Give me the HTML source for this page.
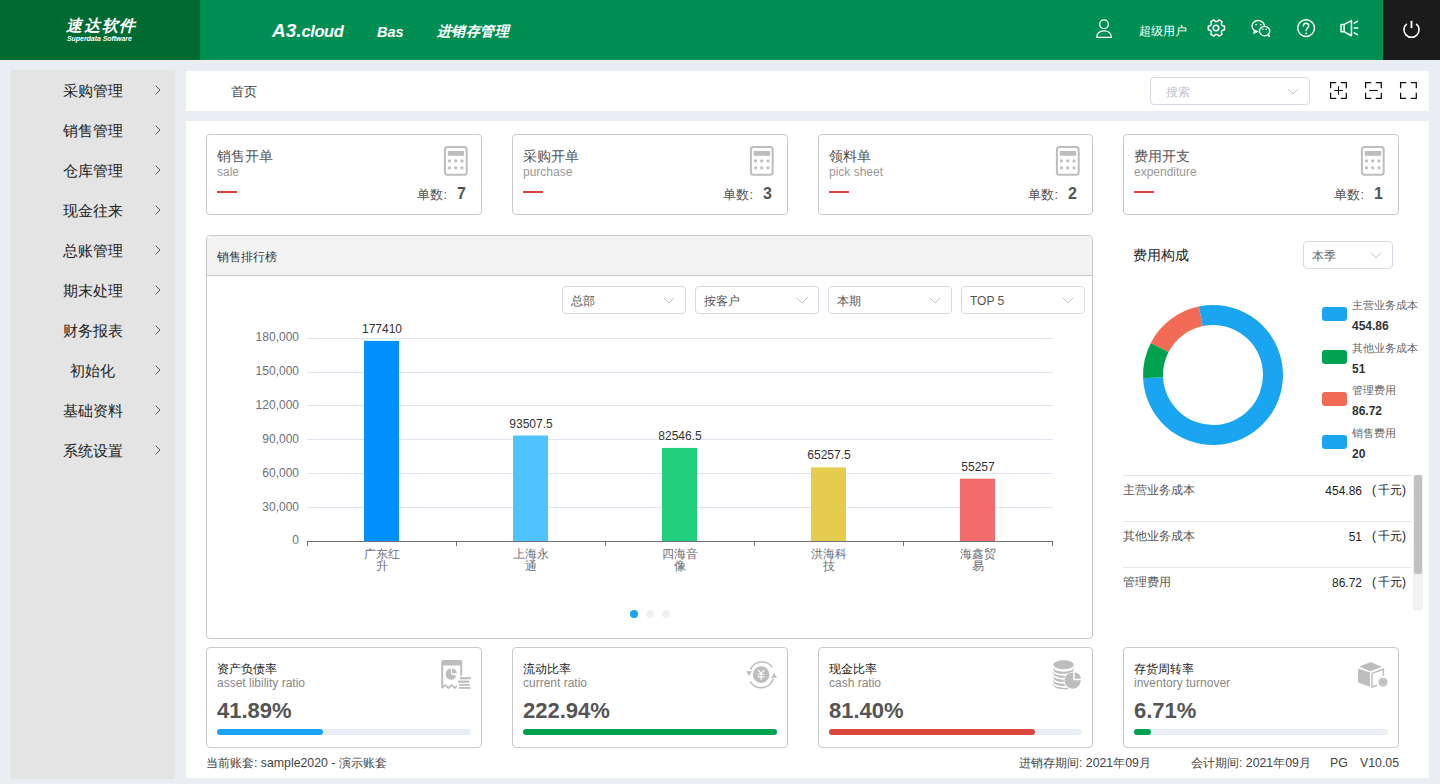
<!DOCTYPE html>
<html><head><meta charset="utf-8">
<style>
*{box-sizing:border-box;margin:0;padding:0}
html,body{width:1440px;height:784px;overflow:hidden}
body{background:#eaeef3;font-family:"Liberation Sans",sans-serif;position:relative;color:#333}
.abs{position:absolute}
#hdr{left:0;top:0;width:1440px;height:60px;background:#008f53}
#logo{left:0;top:0;width:200px;height:60px;background:#006b31}
#pwr{left:1383px;top:0;width:57px;height:60px;background:#1b1b1b}
.wt{color:#fff;white-space:nowrap}
#side{left:10px;top:70px;width:165px;height:709px;background:#e4e4e4}
.mi{position:absolute;left:0;width:165px;height:20px;font-size:15px;line-height:20px;color:#222}
.mi span{position:absolute;left:52px;width:61px;text-align:center}
.mi svg{position:absolute;left:145px;top:4px}
#crumb{left:186px;top:71px;width:1243px;height:40px;background:#fff}
#main{left:186px;top:121px;width:1243px;height:657px;background:#fff}
.card{position:absolute;border:1px solid #c9c9c9;border-radius:4px;background:#fff}
.sel{position:absolute;border:1px solid #d7dae2;border-radius:4px;background:#fff;font-size:12px;color:#555}
.sel svg{position:absolute}
</style></head><body>
<div id="hdr" class="abs"></div>
<div id="logo" class="abs"></div>
<div id="pwr" class="abs"></div>

<div class="abs wt" style="left:66px;top:16px;font-size:16px;font-weight:900;font-style:italic;line-height:20px;letter-spacing:1.8px">速达软件</div>
<div class="abs wt" style="left:67px;top:35px;font-size:7px;font-weight:bold;font-style:italic;line-height:8px;letter-spacing:-0.05px">Superdata Software</div>
<div class="abs wt" style="left:272px;top:19px;font-size:19px;font-weight:bold;font-style:italic;line-height:24px">A3.<span style="font-size:16.5px;letter-spacing:-0.45px">cloud</span></div>
<div class="abs wt" style="left:377px;top:22px;font-size:14.5px;font-weight:bold;font-style:italic;line-height:20px">Bas</div>
<div class="abs wt" style="left:437px;top:21px;font-size:14px;letter-spacing:0.4px;font-weight:bold;font-style:italic;line-height:20px">进销存管理</div>
<!-- user icon -->
<svg class="abs" style="left:1094px;top:18px" width="20" height="22" viewBox="0 0 20 22" fill="none" stroke="#fff" stroke-width="1.35">
<circle cx="10" cy="6.2" r="4.35"/><path d="M2.6 19.4 C2.6 15.3 5.8 12.8 10 12.8 C14.2 12.8 17.4 15.3 17.4 19.4 Z"/></svg>
<div class="abs wt" style="left:1139px;top:22px;font-size:12px;line-height:18px">超级用户</div>
<!-- gear -->
<svg class="abs" style="left:1205px;top:17px" width="22" height="22" viewBox="0 0 22 22" fill="none" stroke="#fff" stroke-width="1.5" stroke-linejoin="round">
<path transform="rotate(90 11 11)" d="M9.2 2.5 h3.6 l0.6 2.3 l1.6 0.9 l2.3 -0.7 l1.8 3.1 l-1.7 1.6 v1.8 l1.7 1.6 l-1.8 3.1 l-2.3 -0.7 l-1.6 0.9 l-0.6 2.3 h-3.6 l-0.6 -2.3 l-1.6 -0.9 l-2.3 0.7 l-1.8 -3.1 l1.7 -1.6 v-1.8 l-1.7 -1.6 l1.8 -3.1 l2.3 0.7 l1.6 -0.9 z"/>
<circle cx="11" cy="11" r="2.8"/></svg>
<!-- wechat -->
<svg class="abs" style="left:1245px;top:14px" width="30" height="30" viewBox="0 0 30 30" fill="none" stroke="#fff" stroke-width="1.3">
<path d="M19.4 11.6 A6.2 5.5 0 1 0 13.3 17.5"/><path d="M9.3 16.6 L8.6 19.6 L12.2 17.9" fill="#fff" stroke-width="0.9" stroke-linejoin="round"/>
<ellipse cx="19.6" cy="17.05" rx="5.15" ry="4.7"/><path d="M22.6 21.2 L24.3 23 L24.1 20.6" fill="#fff" stroke-width="0.9" stroke-linejoin="round"/>
<g fill="#fff" stroke="none"><rect x="10.2" y="10" width="1.6" height="1.3"/><rect x="14.9" y="10" width="1.6" height="1.3"/>
<rect x="17.1" y="14.6" width="1.3" height="1.3"/><rect x="20.6" y="14.6" width="1.3" height="1.3"/></g></svg>
<!-- help -->
<svg class="abs" style="left:1295px;top:17px" width="22" height="22" viewBox="0 0 22 22" fill="none" stroke="#fff" stroke-width="1.4">
<circle cx="11.1" cy="11.1" r="8.4"/><path d="M8.4 8.9 C8.4 7.2 9.6 6.3 11.1 6.3 C12.7 6.3 13.7 7.4 13.7 8.7 C13.7 10.6 11.2 11 11.2 13.6" stroke-linecap="round"/>
<circle cx="11.2" cy="16.4" r="0.95" fill="#fff" stroke="none"/></svg>
<!-- speaker -->
<svg class="abs" style="left:1339px;top:17px" width="22" height="22" viewBox="0 0 22 22" fill="none" stroke="#fff" stroke-width="1.5" stroke-linejoin="round">
<path d="M2.05 7.4 h3.2 l7.2 -3.85 v15.2 l-7.2 -3.9 h-3.2 z"/><path d="M5.1 7.4 v7.5"/>
<path d="M15.2 6.1 l3.2 -1.8 M15.2 11 h3.5 M15.2 15.9 l3.2 1.8" stroke-linecap="round"/></svg>
<!-- power -->
<svg class="abs" style="left:1401px;top:18px" width="22" height="22" viewBox="0 0 22 22" fill="none" stroke="#fff" stroke-width="1.6">
<path d="M5.85 5.80 A7.55 7.55 0 1 0 15.15 5.80"/><path d="M10.5 2.8 V10.1" stroke-width="1.9"/></svg>
<div id="side" class="abs">
<div class="mi" style="top:11px"><span>采购管理</span><svg width="6" height="10" viewBox="0 0 6 10" fill="none" stroke="#555" stroke-width="1"><path d="M0.6 0.6 L5 5 L0.6 9.4"/></svg></div>
<div class="mi" style="top:51px"><span>销售管理</span><svg width="6" height="10" viewBox="0 0 6 10" fill="none" stroke="#555" stroke-width="1"><path d="M0.6 0.6 L5 5 L0.6 9.4"/></svg></div>
<div class="mi" style="top:91px"><span>仓库管理</span><svg width="6" height="10" viewBox="0 0 6 10" fill="none" stroke="#555" stroke-width="1"><path d="M0.6 0.6 L5 5 L0.6 9.4"/></svg></div>
<div class="mi" style="top:131px"><span>现金往来</span><svg width="6" height="10" viewBox="0 0 6 10" fill="none" stroke="#555" stroke-width="1"><path d="M0.6 0.6 L5 5 L0.6 9.4"/></svg></div>
<div class="mi" style="top:171px"><span>总账管理</span><svg width="6" height="10" viewBox="0 0 6 10" fill="none" stroke="#555" stroke-width="1"><path d="M0.6 0.6 L5 5 L0.6 9.4"/></svg></div>
<div class="mi" style="top:211px"><span>期末处理</span><svg width="6" height="10" viewBox="0 0 6 10" fill="none" stroke="#555" stroke-width="1"><path d="M0.6 0.6 L5 5 L0.6 9.4"/></svg></div>
<div class="mi" style="top:251px"><span>财务报表</span><svg width="6" height="10" viewBox="0 0 6 10" fill="none" stroke="#555" stroke-width="1"><path d="M0.6 0.6 L5 5 L0.6 9.4"/></svg></div>
<div class="mi" style="top:291px"><span>初始化</span><svg width="6" height="10" viewBox="0 0 6 10" fill="none" stroke="#555" stroke-width="1"><path d="M0.6 0.6 L5 5 L0.6 9.4"/></svg></div>
<div class="mi" style="top:331px"><span>基础资料</span><svg width="6" height="10" viewBox="0 0 6 10" fill="none" stroke="#555" stroke-width="1"><path d="M0.6 0.6 L5 5 L0.6 9.4"/></svg></div>
<div class="mi" style="top:371px"><span>系统设置</span><svg width="6" height="10" viewBox="0 0 6 10" fill="none" stroke="#555" stroke-width="1"><path d="M0.6 0.6 L5 5 L0.6 9.4"/></svg></div>
</div>
<div id="crumb" class="abs"></div>
<div id="main" class="abs"></div>

<div class="abs" style="left:231px;top:83px;font-size:13px;line-height:18px;color:#444">首页</div>
<div class="sel" style="left:1150px;top:77px;width:160px;height:28px">
<span style="position:absolute;left:15px;top:6px;line-height:16px;color:#c0c4cc">搜索</span>
<svg style="left:136px;top:10px" width="12" height="7" viewBox="0 0 12 7" fill="none" stroke="#c0c4cc" stroke-width="1"><path d="M0.8 0.8 L6 6 L11.2 0.8"/></svg></div>
<svg class="abs" style="left:1329px;top:81px" width="19" height="19" viewBox="0 0 19 19" fill="none" stroke="#111" stroke-width="1.25">
<path d="M1.6 7.2 V1.7 H7.2 M11.8 1.7 H17.3 V7.2 M17.3 11.8 V17.3 H11.8 M7.2 17.3 H1.6 V11.8"/><path d="M5.2 9.5 H13.8 M9.5 5.2 V13.8" stroke-width="1.1"/></svg>
<svg class="abs" style="left:1364px;top:81px" width="19" height="19" viewBox="0 0 19 19" fill="none" stroke="#111" stroke-width="1.25">
<path d="M1.6 7.2 V1.7 H7.2 M11.8 1.7 H17.3 V7.2 M17.3 11.8 V17.3 H11.8 M7.2 17.3 H1.6 V11.8"/><path d="M5.2 9.5 H13.8" stroke-width="1.1"/></svg>
<svg class="abs" style="left:1399px;top:81px" width="19" height="19" viewBox="0 0 19 19" fill="none" stroke="#111" stroke-width="1.25">
<path d="M1.6 7.2 V1.7 H7.2 M11.8 1.7 H17.3 V7.2 M17.3 11.8 V17.3 H11.8 M7.2 17.3 H1.6 V11.8"/></svg>

<div class="card" style="left:206px;top:134px;width:276px;height:81px">
<div style="position:absolute;left:10px;top:12px;font-size:14px;line-height:18px;color:#555">销售开单</div>
<div style="position:absolute;left:10px;top:29px;font-size:12px;line-height:16px;color:#999">sale</div>
<div style="position:absolute;left:10px;top:56px;width:20px;height:2px;background:#d9443a"></div>
<svg style="position:absolute;left:236px;top:10px" width="28" height="32" viewBox="0 0 28 32" fill="none">
<rect x="1.9" y="2.1" width="21.8" height="27.6" rx="2.5" stroke="#bdbdbd" stroke-width="2"/>
<rect x="4.8" y="6" width="16.3" height="4.8" fill="#bdbdbd"/>
<g fill="#bdbdbd"><circle cx="6.5" cy="15.9" r="1.6"/><circle cx="12.7" cy="15.9" r="1.6"/><circle cx="19" cy="15.9" r="1.6"/>
<circle cx="6.5" cy="22.8" r="1.6"/><circle cx="12.7" cy="22.8" r="1.6"/><circle cx="19" cy="22.8" r="1.6"/></g></svg>
<div style="position:absolute;right:15px;top:50px;font-size:13px;line-height:18px;color:#555;white-space:nowrap">单数:<b style="font-size:16px;margin-left:10px">7</b></div>
</div>
<div class="card" style="left:512px;top:134px;width:276px;height:81px">
<div style="position:absolute;left:10px;top:12px;font-size:14px;line-height:18px;color:#555">采购开单</div>
<div style="position:absolute;left:10px;top:29px;font-size:12px;line-height:16px;color:#999">purchase</div>
<div style="position:absolute;left:10px;top:56px;width:20px;height:2px;background:#d9443a"></div>
<svg style="position:absolute;left:236px;top:10px" width="28" height="32" viewBox="0 0 28 32" fill="none">
<rect x="1.9" y="2.1" width="21.8" height="27.6" rx="2.5" stroke="#bdbdbd" stroke-width="2"/>
<rect x="4.8" y="6" width="16.3" height="4.8" fill="#bdbdbd"/>
<g fill="#bdbdbd"><circle cx="6.5" cy="15.9" r="1.6"/><circle cx="12.7" cy="15.9" r="1.6"/><circle cx="19" cy="15.9" r="1.6"/>
<circle cx="6.5" cy="22.8" r="1.6"/><circle cx="12.7" cy="22.8" r="1.6"/><circle cx="19" cy="22.8" r="1.6"/></g></svg>
<div style="position:absolute;right:15px;top:50px;font-size:13px;line-height:18px;color:#555;white-space:nowrap">单数:<b style="font-size:16px;margin-left:10px">3</b></div>
</div>
<div class="card" style="left:818px;top:134px;width:275px;height:81px">
<div style="position:absolute;left:10px;top:12px;font-size:14px;line-height:18px;color:#555">领料单</div>
<div style="position:absolute;left:10px;top:29px;font-size:12px;line-height:16px;color:#999">pick sheet</div>
<div style="position:absolute;left:10px;top:56px;width:20px;height:2px;background:#d9443a"></div>
<svg style="position:absolute;left:236px;top:10px" width="28" height="32" viewBox="0 0 28 32" fill="none">
<rect x="1.9" y="2.1" width="21.8" height="27.6" rx="2.5" stroke="#bdbdbd" stroke-width="2"/>
<rect x="4.8" y="6" width="16.3" height="4.8" fill="#bdbdbd"/>
<g fill="#bdbdbd"><circle cx="6.5" cy="15.9" r="1.6"/><circle cx="12.7" cy="15.9" r="1.6"/><circle cx="19" cy="15.9" r="1.6"/>
<circle cx="6.5" cy="22.8" r="1.6"/><circle cx="12.7" cy="22.8" r="1.6"/><circle cx="19" cy="22.8" r="1.6"/></g></svg>
<div style="position:absolute;right:15px;top:50px;font-size:13px;line-height:18px;color:#555;white-space:nowrap">单数:<b style="font-size:16px;margin-left:10px">2</b></div>
</div>
<div class="card" style="left:1123px;top:134px;width:276px;height:81px">
<div style="position:absolute;left:10px;top:12px;font-size:14px;line-height:18px;color:#555">费用开支</div>
<div style="position:absolute;left:10px;top:29px;font-size:12px;line-height:16px;color:#999">expenditure</div>
<div style="position:absolute;left:10px;top:56px;width:20px;height:2px;background:#d9443a"></div>
<svg style="position:absolute;left:236px;top:10px" width="28" height="32" viewBox="0 0 28 32" fill="none">
<rect x="1.9" y="2.1" width="21.8" height="27.6" rx="2.5" stroke="#bdbdbd" stroke-width="2"/>
<rect x="4.8" y="6" width="16.3" height="4.8" fill="#bdbdbd"/>
<g fill="#bdbdbd"><circle cx="6.5" cy="15.9" r="1.6"/><circle cx="12.7" cy="15.9" r="1.6"/><circle cx="19" cy="15.9" r="1.6"/>
<circle cx="6.5" cy="22.8" r="1.6"/><circle cx="12.7" cy="22.8" r="1.6"/><circle cx="19" cy="22.8" r="1.6"/></g></svg>
<div style="position:absolute;right:15px;top:50px;font-size:13px;line-height:18px;color:#555;white-space:nowrap">单数:<b style="font-size:16px;margin-left:10px">1</b></div>
</div>
<div class="abs" style="left:206px;top:235px;width:887px;height:404px;border:1px solid #c9c9c9;border-radius:4px;background:#fff">
<div style="position:absolute;left:0;top:0;width:885px;height:40px;background:#f3f3f3;border-bottom:1px solid #c9c9c9;border-radius:3px 3px 0 0"></div>
<div style="position:absolute;left:10px;top:13px;font-size:12px;line-height:16px;color:#333">销售排行榜</div>
</div>
<div class="sel" style="left:562px;top:286px;width:124px;height:28px">
<span style="position:absolute;left:8px;top:6px;line-height:16px">总部</span>
<svg style="left:100px;top:10px" width="12" height="7" viewBox="0 0 12 7" fill="none" stroke="#c0c4cc" stroke-width="1"><path d="M0.8 0.8 L6 6 L11.2 0.8"/></svg></div>
<div class="sel" style="left:695px;top:286px;width:124px;height:28px">
<span style="position:absolute;left:8px;top:6px;line-height:16px">按客户</span>
<svg style="left:100px;top:10px" width="12" height="7" viewBox="0 0 12 7" fill="none" stroke="#c0c4cc" stroke-width="1"><path d="M0.8 0.8 L6 6 L11.2 0.8"/></svg></div>
<div class="sel" style="left:828px;top:286px;width:124px;height:28px">
<span style="position:absolute;left:8px;top:6px;line-height:16px">本期</span>
<svg style="left:100px;top:10px" width="12" height="7" viewBox="0 0 12 7" fill="none" stroke="#c0c4cc" stroke-width="1"><path d="M0.8 0.8 L6 6 L11.2 0.8"/></svg></div>
<div class="sel" style="left:961px;top:286px;width:124px;height:28px">
<span style="position:absolute;left:8px;top:6px;line-height:16px">TOP 5</span>
<svg style="left:100px;top:10px" width="12" height="7" viewBox="0 0 12 7" fill="none" stroke="#c0c4cc" stroke-width="1"><path d="M0.8 0.8 L6 6 L11.2 0.8"/></svg></div>
<svg class="abs" style="left:0;top:0" width="1440" height="784" font-family="Liberation Sans, sans-serif" font-size="12">
<line x1="307" x2="1053" y1="507.5" y2="507.5" stroke="#e0e6f1" stroke-width="1"/>
<line x1="307" x2="1053" y1="473.5" y2="473.5" stroke="#e0e6f1" stroke-width="1"/>
<line x1="307" x2="1053" y1="439.5" y2="439.5" stroke="#e0e6f1" stroke-width="1"/>
<line x1="307" x2="1053" y1="405.5" y2="405.5" stroke="#e0e6f1" stroke-width="1"/>
<line x1="307" x2="1053" y1="372.5" y2="372.5" stroke="#e0e6f1" stroke-width="1"/>
<line x1="307" x2="1053" y1="338.5" y2="338.5" stroke="#e0e6f1" stroke-width="1"/>
<text x="299" y="544.3" text-anchor="end" fill="#6e7079">0</text>
<text x="299" y="510.5" text-anchor="end" fill="#6e7079">30,000</text>
<text x="299" y="476.6" text-anchor="end" fill="#6e7079">60,000</text>
<text x="299" y="442.8" text-anchor="end" fill="#6e7079">90,000</text>
<text x="299" y="409.0" text-anchor="end" fill="#6e7079">120,000</text>
<text x="299" y="375.2" text-anchor="end" fill="#6e7079">150,000</text>
<text x="299" y="341.3" text-anchor="end" fill="#6e7079">180,000</text>
<rect x="364" y="340.9" width="35" height="200.1" fill="#0091ff"/>
<text x="382.0" y="332.9" text-anchor="middle" fill="#333">177410</text>
<text x="382.0" y="558" text-anchor="middle" fill="#6e7079">广东红</text>
<text x="382.0" y="570" text-anchor="middle" fill="#6e7079">升</text>
<rect x="513" y="435.5" width="35" height="105.5" fill="#4ec3ff"/>
<text x="531.0" y="427.5" text-anchor="middle" fill="#333">93507.5</text>
<text x="531.0" y="558" text-anchor="middle" fill="#6e7079">上海永</text>
<text x="531.0" y="570" text-anchor="middle" fill="#6e7079">通</text>
<rect x="662" y="447.9" width="35" height="93.1" fill="#22cf7c"/>
<text x="680.0" y="439.9" text-anchor="middle" fill="#333">82546.5</text>
<text x="680.0" y="558" text-anchor="middle" fill="#6e7079">四海音</text>
<text x="680.0" y="570" text-anchor="middle" fill="#6e7079">像</text>
<rect x="811" y="467.4" width="35" height="73.6" fill="#e5cc4e"/>
<text x="829.0" y="459.4" text-anchor="middle" fill="#333">65257.5</text>
<text x="829.0" y="558" text-anchor="middle" fill="#6e7079">洪海科</text>
<text x="829.0" y="570" text-anchor="middle" fill="#6e7079">技</text>
<rect x="960" y="478.7" width="35" height="62.3" fill="#f46b6b"/>
<text x="978.0" y="470.7" text-anchor="middle" fill="#333">55257</text>
<text x="978.0" y="558" text-anchor="middle" fill="#6e7079">海鑫贸</text>
<text x="978.0" y="570" text-anchor="middle" fill="#6e7079">易</text>
<line x1="307" x2="1053" y1="541.5" y2="541.5" stroke="#6e7079" stroke-width="1"/>
<line x1="307.5" x2="307.5" y1="541" y2="546" stroke="#6e7079" stroke-width="1"/>
<line x1="456.5" x2="456.5" y1="541" y2="546" stroke="#6e7079" stroke-width="1"/>
<line x1="605.5" x2="605.5" y1="541" y2="546" stroke="#6e7079" stroke-width="1"/>
<line x1="754.5" x2="754.5" y1="541" y2="546" stroke="#6e7079" stroke-width="1"/>
<line x1="903.5" x2="903.5" y1="541" y2="546" stroke="#6e7079" stroke-width="1"/>
<line x1="1052.5" x2="1052.5" y1="541" y2="546" stroke="#6e7079" stroke-width="1"/>
<circle cx="634" cy="614" r="4" fill="#1aa5f3"/><circle cx="650" cy="614" r="4" fill="#eff0f3"/><circle cx="666" cy="614" r="4" fill="#eff0f3"/>
</svg>
<div class="abs" style="left:1133px;top:246px;font-size:14px;line-height:18px;color:#222">费用构成</div>
<div class="sel" style="left:1303px;top:241px;width:90px;height:28px">
<span style="position:absolute;left:8px;top:6px;line-height:16px;color:#666">本季</span>
<svg style="left:66px;top:10px" width="12" height="7" viewBox="0 0 12 7" fill="none" stroke="#c0c4cc" stroke-width="1"><path d="M0.8 0.8 L6 6 L11.2 0.8"/></svg></div>
<svg class="abs" style="left:0;top:0" width="1440" height="784">
<path d="M1213.00 305.00 A70 70 0 1 1 1143.08 378.28 L1163.06 377.35 A50 50 0 1 0 1213.00 325.00 Z" fill="#1aa5f3"/>
<path d="M1143.08 378.28 A70 70 0 0 1 1150.79 342.91 L1168.56 352.08 A50 50 0 0 0 1163.06 377.35 Z" fill="#00a250"/>
<path d="M1150.79 342.91 A70 70 0 0 1 1198.74 306.47 L1202.81 326.05 A50 50 0 0 0 1168.56 352.08 Z" fill="#f26b55"/>
<path d="M1198.74 306.47 A70 70 0 0 1 1213.00 305.00 L1213.00 325.00 A50 50 0 0 0 1202.81 326.05 Z" fill="#1aa5f3"/>
</svg>
<div class="abs" style="left:1322px;top:307.0px;width:25px;height:14px;border-radius:3px;background:#1aa5f3"></div>
<div class="abs" style="left:1352px;top:298.0px;font-size:11px;line-height:14px;color:#666;white-space:nowrap">主营业务成本</div>
<div class="abs" style="left:1352px;top:318.0px;font-size:12px;line-height:16px;color:#333;font-weight:bold">454.86</div>
<div class="abs" style="left:1322px;top:349.5px;width:25px;height:14px;border-radius:3px;background:#00a250"></div>
<div class="abs" style="left:1352px;top:340.5px;font-size:11px;line-height:14px;color:#666;white-space:nowrap">其他业务成本</div>
<div class="abs" style="left:1352px;top:360.5px;font-size:12px;line-height:16px;color:#333;font-weight:bold">51</div>
<div class="abs" style="left:1322px;top:392.0px;width:25px;height:14px;border-radius:3px;background:#f26b55"></div>
<div class="abs" style="left:1352px;top:383.0px;font-size:11px;line-height:14px;color:#666;white-space:nowrap">管理费用</div>
<div class="abs" style="left:1352px;top:403.0px;font-size:12px;line-height:16px;color:#333;font-weight:bold">86.72</div>
<div class="abs" style="left:1322px;top:434.5px;width:25px;height:14px;border-radius:3px;background:#1aa5f3"></div>
<div class="abs" style="left:1352px;top:425.5px;font-size:11px;line-height:14px;color:#666;white-space:nowrap">销售费用</div>
<div class="abs" style="left:1352px;top:445.5px;font-size:12px;line-height:16px;color:#333;font-weight:bold">20</div>
<div class="abs" style="left:1123px;top:475px;width:289px;height:1px;background:#e6e6e6"></div>
<div class="abs" style="left:1123px;top:482px;font-size:12px;line-height:16px;color:#555">主营业务成本</div>
<div class="abs" style="left:1262px;top:483px;width:100px;text-align:right;font-size:12px;line-height:16px;color:#222">454.86</div><div class="abs" style="left:1372px;top:482px;font-size:12px;line-height:16px;color:#222;white-space:nowrap"><span style="margin-right:2px">(</span>千元)</div>
<div class="abs" style="left:1123px;top:521px;width:289px;height:1px;background:#e6e6e6"></div>
<div class="abs" style="left:1123px;top:528px;font-size:12px;line-height:16px;color:#555">其他业务成本</div>
<div class="abs" style="left:1262px;top:529px;width:100px;text-align:right;font-size:12px;line-height:16px;color:#222">51</div><div class="abs" style="left:1372px;top:528px;font-size:12px;line-height:16px;color:#222;white-space:nowrap"><span style="margin-right:2px">(</span>千元)</div>
<div class="abs" style="left:1123px;top:567px;width:289px;height:1px;background:#e6e6e6"></div>
<div class="abs" style="left:1123px;top:574px;font-size:12px;line-height:16px;color:#555">管理费用</div>
<div class="abs" style="left:1262px;top:575px;width:100px;text-align:right;font-size:12px;line-height:16px;color:#222">86.72</div><div class="abs" style="left:1372px;top:574px;font-size:12px;line-height:16px;color:#222;white-space:nowrap"><span style="margin-right:2px">(</span>千元)</div>
<div class="abs" style="left:1413px;top:475px;width:10px;height:135px;background:#f1f1f1"></div>
<div class="abs" style="left:1414px;top:475px;width:8px;height:99px;background:#c1c1c1;border-radius:2px"></div>
<div class="card" style="left:206px;top:647px;width:276px;height:101px">
<div style="position:absolute;left:10px;top:13px;font-size:12px;line-height:16px;color:#222">资产负债率</div>
<div style="position:absolute;left:10px;top:27px;font-size:12px;line-height:16px;color:#888">asset libility ratio</div>
<div style="position:absolute;left:10px;top:49px;font-size:22px;line-height:28px;color:#555;font-weight:bold">41.89%</div>
<div style="position:absolute;left:10px;top:81px;width:254px;height:6px;border-radius:3px;background:#e9edf4"></div>
<div style="position:absolute;left:10px;top:81px;width:106.4px;height:6px;border-radius:3px;background:#1aa3f2"></div>
<svg style="position:absolute;left:232px;top:11px" width="34" height="32" viewBox="0 0 34 32">
<path d="M2.2 2.4 a1.5 1.5 0 0 1 1.5 -1.5 h18 a1.5 1.5 0 0 1 1.5 1.5 v4.2 h-21 z" fill="#bdbdbd"/>
<path d="M3.2 6 V29 M22.2 6 V16.8" stroke="#bdbdbd" stroke-width="2" fill="none"/>
<path d="M3 29.2 L6.2 26.2 L9.4 29 L12.6 26.2 L15.8 29 L18 26.6" stroke="#bdbdbd" stroke-width="1.7" fill="none"/>
<path d="M12 9.8 A5.4 5.4 0 1 0 17.2 17 L12 15.2 Z" fill="#bdbdbd"/><path d="M13 9.6 A5.4 5.4 0 0 1 17.9 14.3 L13 14.3 Z" fill="#bdbdbd"/>
<g fill="#bdbdbd"><rect x="21" y="18.1" width="10.8" height="2.2"/><rect x="19" y="21.6" width="11.2" height="2.2"/><rect x="20" y="25" width="10.9" height="1.8"/><rect x="20" y="28" width="11.2" height="1.9"/></g></svg>
</div>
<div class="card" style="left:512px;top:647px;width:276px;height:101px">
<div style="position:absolute;left:10px;top:13px;font-size:12px;line-height:16px;color:#222">流动比率</div>
<div style="position:absolute;left:10px;top:27px;font-size:12px;line-height:16px;color:#888">current ratio</div>
<div style="position:absolute;left:10px;top:49px;font-size:22px;line-height:28px;color:#555;font-weight:bold">222.94%</div>
<div style="position:absolute;left:10px;top:81px;width:254px;height:6px;border-radius:3px;background:#e9edf4"></div>
<div style="position:absolute;left:10px;top:81px;width:254.0px;height:6px;border-radius:3px;background:#00a250"></div>
<svg style="position:absolute;left:232px;top:11px" width="34" height="32" viewBox="0 0 34 32" fill="none">
<path d="M5.4 10.6 A12.6 12.6 0 0 1 27.3 8.4" stroke="#bdbdbd" stroke-width="1.6"/><path d="M1.2 12.2 h5.8 l-3 4.8 z" fill="#bdbdbd"/>
<path d="M28.2 19.6 A12.6 12.6 0 0 1 5.3 22.6" stroke="#bdbdbd" stroke-width="1.6"/><path d="M26.2 18.8 h5.8 l-2.9 -4.8 z" fill="#bdbdbd"/>
<circle cx="16.1" cy="15.6" r="8.3" fill="#bdbdbd"/>
<path d="M13 10.8 l3.1 3.8 l3.1 -3.8 M16.1 14.6 v6.4 M12.8 15.2 h6.6 M12.8 17.9 h6.6" stroke="#fff" stroke-width="1.1"/></svg>
</div>
<div class="card" style="left:818px;top:647px;width:275px;height:101px">
<div style="position:absolute;left:10px;top:13px;font-size:12px;line-height:16px;color:#222">现金比率</div>
<div style="position:absolute;left:10px;top:27px;font-size:12px;line-height:16px;color:#888">cash ratio</div>
<div style="position:absolute;left:10px;top:49px;font-size:22px;line-height:28px;color:#555;font-weight:bold">81.40%</div>
<div style="position:absolute;left:10px;top:81px;width:253px;height:6px;border-radius:3px;background:#e9edf4"></div>
<div style="position:absolute;left:10px;top:81px;width:206px;height:6px;border-radius:3px;background:#d9463b"></div>
<svg style="position:absolute;left:232px;top:11px" width="34" height="32" viewBox="0 0 34 32">
<g fill="#bdbdbd"><ellipse cx="12.6" cy="5.7" rx="10.2" ry="4.5"/>
<path d="M2.4 8.6 q0.5 3.8 10.2 4.2 q9.7 -0.4 10.2 -4.2 v2.2 q-0.5 4 -10.2 4.3 q-9.7 -0.3 -10.2 -4.3 z"/>
<path d="M2.4 12.6 q0.5 3.8 10.2 4.2 q2.8 0 4.8 -0.5 v2.2 q-2 0.4 -4.8 0.4 q-9.7 -0.3 -10.2 -4.3 z"/>
<path d="M2.4 16.6 q0.5 3.8 10.2 4.2 q2.3 0 3.4 -0.2 v2.2 q-1.1 0.2 -3.4 0.2 q-9.7 -0.3 -10.2 -4.3 z"/>
<path d="M2.4 20.6 q0.5 3.8 10.2 4.2 q2.3 0 3.4 -0.2 v2.2 q-1.1 0.2 -3.4 0.2 q-9.7 -0.3 -10.2 -4.3 z"/>
<path d="M2.4 24.6 q0.5 3.8 10.2 4.2 q3 0 5 -0.4 v1.6 q-2 0.3 -5 0.3 q-9.7 -0.3 -10.2 -4.3 z"/></g>
<circle cx="21.4" cy="21.8" r="8.8" fill="#fff"/>
<path d="M22.2 13.4 A8.2 8.2 0 1 0 29.8 21.2 H22.2 Z" fill="#bdbdbd"/><path d="M23.6 13.2 A7.4 7.4 0 0 1 30 19.8 H23.6 Z" fill="#bdbdbd"/></svg>
</div>
<div class="card" style="left:1123px;top:647px;width:276px;height:101px">
<div style="position:absolute;left:10px;top:13px;font-size:12px;line-height:16px;color:#222">存货周转率</div>
<div style="position:absolute;left:10px;top:27px;font-size:12px;line-height:16px;color:#888">inventory turnover</div>
<div style="position:absolute;left:10px;top:49px;font-size:22px;line-height:28px;color:#555;font-weight:bold">6.71%</div>
<div style="position:absolute;left:10px;top:81px;width:254px;height:6px;border-radius:3px;background:#e9edf4"></div>
<div style="position:absolute;left:10px;top:81px;width:17.0px;height:6px;border-radius:3px;background:#00a250"></div>
<svg style="position:absolute;left:232px;top:11px" width="34" height="32" viewBox="0 0 34 32">
<path d="M3.3 7.6 L14.8 3.1 L26 7.9 L14.2 12.2 Z" fill="#bdbdbd"/>
<path d="M2.1 9.6 L14 13.6 V27.8 L2.1 23.6 Z" fill="#bdbdbd"/>
<path d="M16 14.4 L27.4 10.2 V16.8 M21.2 26.2 L16 28 V14.4" stroke="#bdbdbd" stroke-width="1.5" fill="none"/>
<circle cx="27" cy="23.2" r="5" fill="#bdbdbd" stroke="#fff" stroke-width="1"/><circle cx="27" cy="23.2" r="3" fill="none" stroke="#d4d4d4" stroke-width="0.7"/></svg>
</div>
<div class="abs" style="left:206px;top:755px;font-size:12.3px;line-height:16px;color:#444;white-space:nowrap">当前账套: sample2020 - 演示账套</div>
<div class="abs" style="left:1019px;top:755px;font-size:12.3px;line-height:16px;color:#444;white-space:nowrap">进销存期间: 2021年09月</div>
<div class="abs" style="left:1191px;top:755px;font-size:12.3px;line-height:16px;color:#444;white-space:nowrap">会计期间: 2021年09月</div>
<div class="abs" style="left:1330px;top:755px;font-size:12.3px;line-height:16px;color:#444;white-space:nowrap">PG</div>
<div class="abs" style="left:1360px;top:755px;font-size:12.3px;line-height:16px;color:#444;white-space:nowrap">V10.05</div>
</body></html>
